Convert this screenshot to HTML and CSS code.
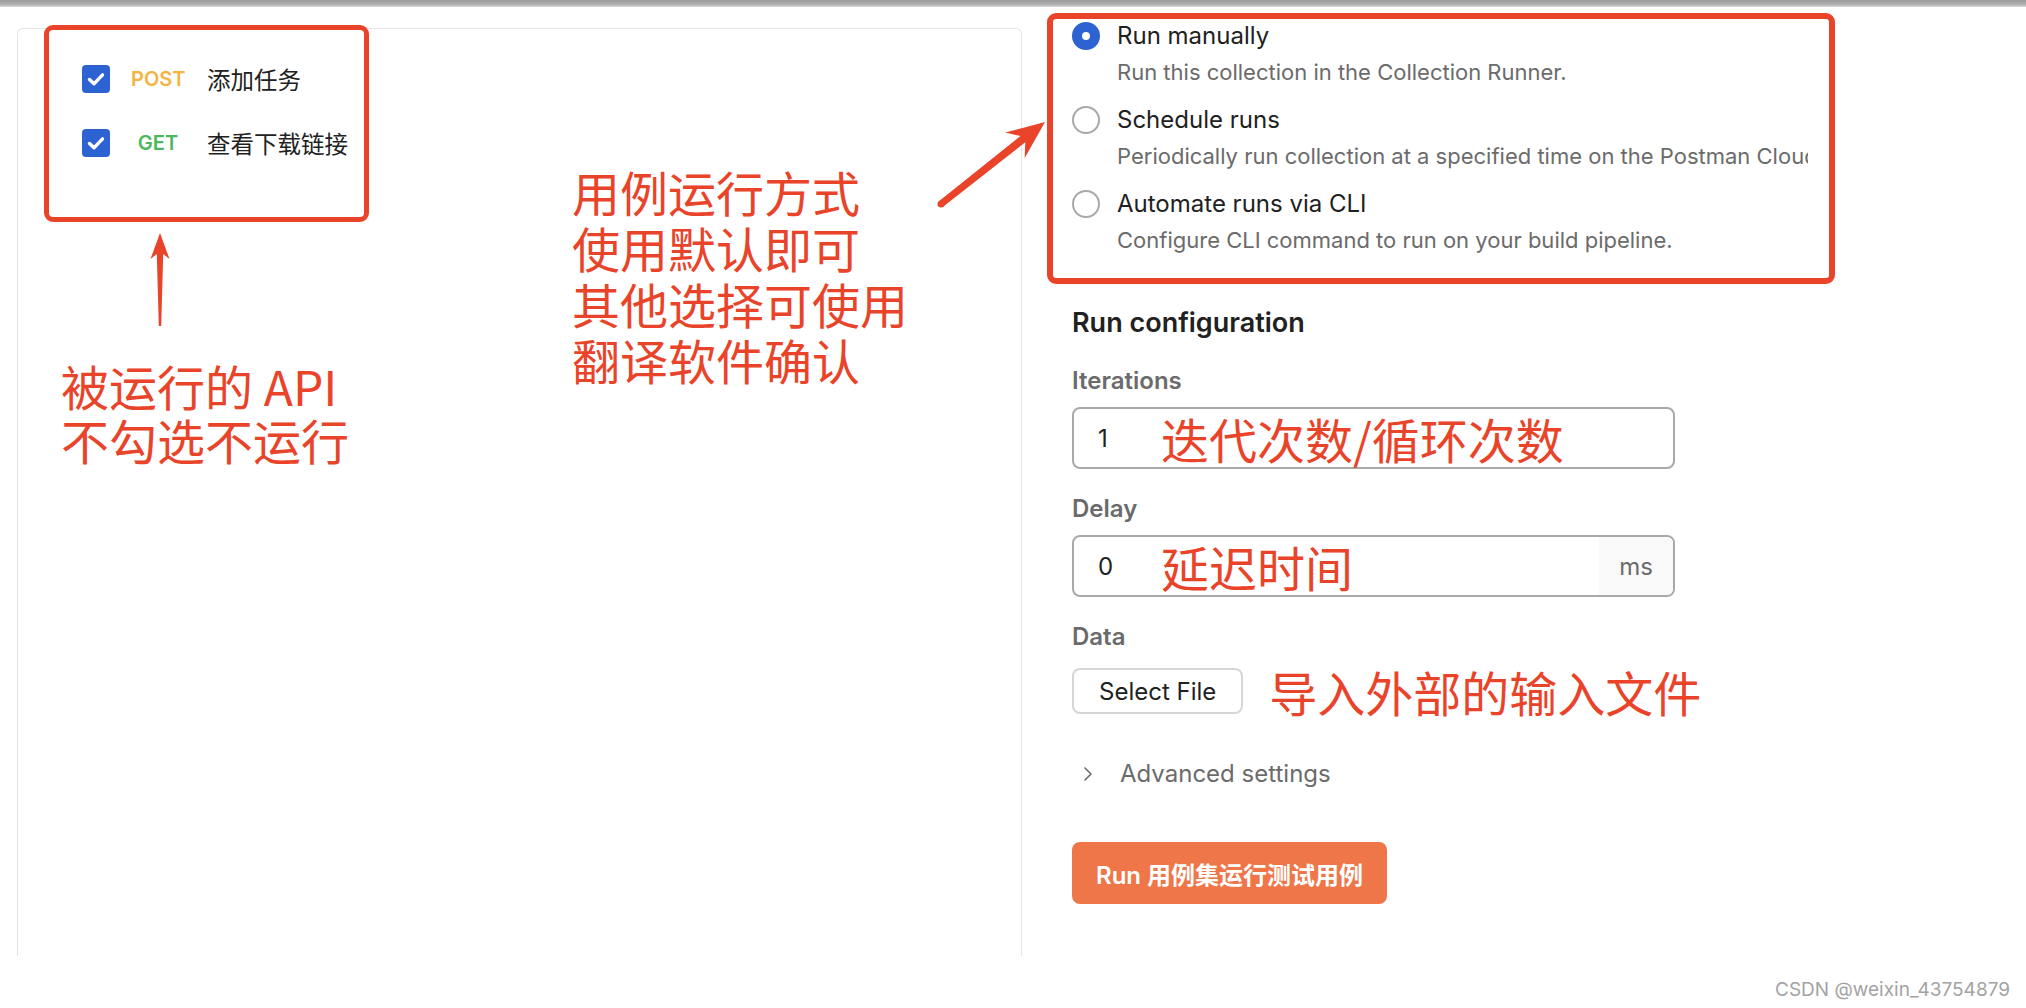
FILE: index.html
```html
<!DOCTYPE html>
<html lang="zh-CN">
<head>
  <meta charset="UTF-8" />
  <meta name="viewport" content="width=device-width, initial-scale=1.0"/>
  <title>Run collection</title>
  <link rel="stylesheet" href="styles.css">
</head>
<body>
  <div class="topbar"></div>

  <div class="page">
    <section class="collection">
      <ul class="requests">
        <li class="request">
          <span class="check">
            <svg width="28" height="28" viewBox="0 0 28 28"><rect width="28" height="28" rx="4" fill="#2c62d2"/><path d="M7.5 14.5l4.5 4.3 8.5-9" fill="none" stroke="#fff" stroke-width="3.4" stroke-linecap="round" stroke-linejoin="round"/></svg>
          </span>
          <span class="method post">POST</span>
          <span class="name">添加任务</span>
        </li>
        <li class="request">
          <span class="check">
            <svg width="28" height="28" viewBox="0 0 28 28"><rect width="28" height="28" rx="4" fill="#2c62d2"/><path d="M7.5 14.5l4.5 4.3 8.5-9" fill="none" stroke="#fff" stroke-width="3.4" stroke-linecap="round" stroke-linejoin="round"/></svg>
          </span>
          <span class="method get">GET</span>
          <span class="name">查看下载链接</span>
        </li>
      </ul>
    </section>

    <section class="config">
      <div class="modes">
        <div class="mode">
          <span class="radio checked"></span>
          <div class="mode-text">
            <div class="mode-title">Run manually</div>
            <div class="mode-desc">Run this collection in the Collection Runner.</div>
          </div>
        </div>
        <div class="mode">
          <span class="radio"></span>
          <div class="mode-text">
            <div class="mode-title">Schedule runs</div>
            <div class="mode-desc">Periodically run collection at a specified time on the Postman Cloud.</div>
          </div>
        </div>
        <div class="mode">
          <span class="radio"></span>
          <div class="mode-text">
            <div class="mode-title">Automate runs via CLI</div>
            <div class="mode-desc">Configure CLI command to run on your build pipeline.</div>
          </div>
        </div>
      </div>

      <h2 class="section-title">Run configuration</h2>

      <div class="field">
        <div class="field-label">Iterations</div>
        <div class="input">
          <span class="value">1</span>
          <span class="note">迭代次数/循环次数</span>
        </div>
      </div>

      <div class="field">
        <div class="field-label">Delay</div>
        <div class="input">
          <span class="value">0</span>
          <span class="note">延迟时间</span>
          <span class="addon">ms</span>
        </div>
      </div>

      <div class="field">
        <div class="field-label">Data</div>
        <div class="data-row">
          <button class="file-btn">Select File</button>
          <span class="note">导入外部的输入文件</span>
        </div>
      </div>

      <div class="advanced">
        <svg width="12" height="16" viewBox="0 0 12 16"><path d="M3 2l6 6-6 6" fill="none" stroke="#6b6b6b" stroke-width="1.6" stroke-linecap="round" stroke-linejoin="round"/></svg>
        <span>Advanced settings</span>
      </div>

      <button class="run-btn">Run 用例集运行测试用例</button>
    </section>
  </div>

  <footer class="watermark">CSDN @weixin_43754879</footer>

  <!-- annotations drawn over the screenshot -->
  <div class="mark mark-requests"></div>
  <div class="mark mark-modes"></div>
  <div class="callout callout-left">被运行的 API<br>不勾选不运行</div>
  <div class="callout callout-mid">用例运行方式<br>使用默认即可<br>其他选择可使用<br>翻译软件确认</div>
  <svg class="arrows" width="2026" height="1008" viewBox="0 0 2026 1008">
    <polygon points="160,233 169.5,259 163.2,254 161.2,326 158.8,326 156.8,254 150.5,259" fill="#e9432a"/>
    <polygon points="1045,122 1024.7,157.9 1025.3,142.3 943.1,206.8 938.9,201.2 1020.5,136 1005.1,132.6" fill="#e9432a"/>
    <circle cx="941" cy="204" r="3.5" fill="#e9432a"/>
  </svg>
</body>
</html>
```

FILE: styles.css
```css
body {
  margin: 0;
  position: relative;
  background: #fff;
  font-family: Inter, "Noto Sans CJK SC", sans-serif;
  color: #212121;
  overflow: hidden;
}

.topbar {
  height: 7px;
  background: linear-gradient(to bottom, #9a9a9a, #b4b4b4 70%, #dcdcdc);
}

.page {
  display: flex;
  align-items: flex-start;
  height: 949px;
}

/* left: request list */
.collection {
  box-sizing: border-box;
  width: 1005px;
  height: 928px;
  margin: 21px 0 0 17px;
  border: 1px solid #e6e6e6;
  border-bottom: none;
  border-radius: 6px 6px 0 0;
}

.requests {
  list-style: none;
  margin: 0;
  padding: 18px 0 0 64px;
}

.request {
  display: flex;
  align-items: center;
  height: 64px;
}

.check {
  display: flex;
  width: 28px;
  height: 28px;
}

.method {
  width: 54px;
  margin-left: 21px;
  text-align: center;
  font-size: 20px;
  font-weight: 600;
}

.post { color: #f2b543; }
.get { color: #4cb85c; }

.name {
  margin-left: 22px;
  font-family: "Noto Sans CJK SC", sans-serif;
  font-size: 23.5px;
  color: #212121;
}

/* right: run config */
.config {
  width: 736px;
  margin-left: 50px;
  overflow: hidden;
}

.modes {
  margin-top: 11px;
}

.mode {
  display: grid;
  grid-template-columns: 28px 1fr;
  column-gap: 17px;
  padding-bottom: 12px;
}

.radio {
  box-sizing: border-box;
  width: 28px;
  height: 28px;
  margin-top: 4px;
  border: 2px solid #a9a9a9;
  border-radius: 50%;
}

.radio.checked {
  border: 10px solid #2c62d2;
}

.mode-title {
  font-size: 24px;
  line-height: 36px;
  white-space: nowrap;
}

.mode-desc {
  font-size: 22px;
  line-height: 36px;
  color: #6b6b6b;
  white-space: nowrap;
}

.section-title {
  margin: 35px 0 3px;
  font-size: 27px;
  font-weight: 600;
  line-height: 36px;
}

.field {
  margin-top: 25px;
}

.field-label {
  font-size: 24px;
  font-weight: 600;
  line-height: 30px;
  color: #6b6b6b;
}

.input {
  box-sizing: border-box;
  display: flex;
  align-items: center;
  width: 603px;
  height: 62px;
  margin-top: 11px;
  padding-left: 24px;
  border: 2px solid #a9a9a9;
  border-radius: 8px;
  font-size: 24px;
}

.value {
  width: 38px;
}

.note {
  margin-left: 25px;
  font-family: "Noto Sans CJK SC", sans-serif;
  font-size: 48px;
  line-height: 56px;
  color: #e9432a;
}

.addon {
  align-self: stretch;
  display: flex;
  align-items: center;
  justify-content: center;
  width: 74px;
  margin-left: auto;
  background: #f9f9f9;
  border-radius: 0 6px 6px 0;
  color: #6b6b6b;
}

.data-row {
  display: flex;
  align-items: center;
  margin-top: 11px;
}

.data-row .note {
  margin-left: 26px;
}

.file-btn {
  box-sizing: border-box;
  height: 46px;
  padding: 0 25px;
  border: 2px solid #d6d6d6;
  border-radius: 8px;
  background: #fff;
  font-family: Inter, sans-serif;
  font-size: 24px;
  color: #212121;
}

.advanced {
  display: flex;
  align-items: center;
  gap: 26px;
  margin-top: 40px;
  padding-left: 10px;
  font-size: 24px;
  line-height: 30px;
  color: #6b6b6b;
}

.run-btn {
  height: 62px;
  margin-top: 53px;
  padding: 0 24px;
  border: none;
  border-radius: 8px;
  background: #ee7649;
  font-family: Inter, "Noto Sans CJK SC", sans-serif;
  font-size: 24px;
  font-weight: 600;
  color: #fff;
}

.watermark {
  padding: 22px 16px 0 0;
  text-align: right;
  font-size: 19px;
  line-height: 24px;
  color: #a3a3a3;
}

/* red annotations */
.mark {
  position: absolute;
  box-sizing: border-box;
  border: 5px solid #e9432a;
  border-radius: 9px;
}

.mark-requests {
  left: 44px;
  top: 25px;
  width: 325px;
  height: 197px;
}

.mark-modes {
  left: 1047px;
  top: 13px;
  width: 788px;
  height: 271px;
  border-width: 6px;
}

.callout {
  position: absolute;
  font-family: "Noto Sans CJK SC", sans-serif;
  font-size: 48px;
  color: #e9432a;
}

.callout-left {
  left: 61px;
  top: 358px;
  line-height: 54px;
}

.callout-mid {
  left: 572px;
  top: 163px;
  line-height: 56px;
}

.arrows {
  position: absolute;
  left: 0;
  top: 0;
  pointer-events: none;
}
```
